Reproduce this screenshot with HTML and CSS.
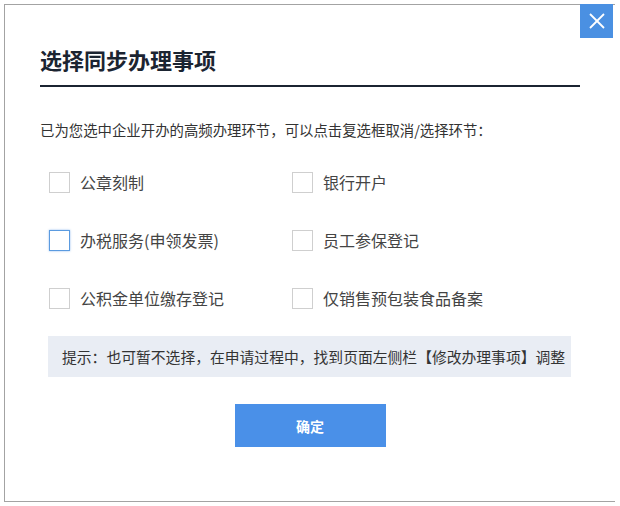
FILE: index.html
```html
<html>
	<head>
		<title>选择同步办理事项</title>
		<meta name="viewport" content="width=device-width, initial-scale=1">
		<link rel="stylesheet" href="styles.css">
	</head>
	<body>
		<div class="dialog">
			<button class="close-btn" aria-label="关闭">
				<svg width="16" height="16" viewBox="0 0 16 16">
					<line x1="1" y1="1" x2="15" y2="15" stroke="#fff" stroke-width="1.8"/>
					<line x1="15" y1="1" x2="1" y2="15" stroke="#fff" stroke-width="1.8"/>
				</svg>
			</button>
			<div class="content">
				<h2 class="title">选择同步办理事项</h2>
				<p class="intro">已为您选中企业开办的高频办理环节，可以点击复选框取消/选择环节：</p>
				<div class="options">
					<label class="option"><span class="box"></span>公章刻制</label>
					<label class="option"><span class="box"></span>银行开户</label>
					<label class="option"><span class="box focus"></span>办税服务(申领发票)</label>
					<label class="option"><span class="box"></span>员工参保登记</label>
					<label class="option"><span class="box"></span>公积金单位缴存登记</label>
					<label class="option"><span class="box"></span>仅销售预包装食品备案</label>
				</div>
				<div class="tip">提示：也可暂不选择，在申请过程中，找到页面左侧栏【修改办理事项】调整</div>
				<div class="actions">
					<button class="btn-ok">确定</button>
				</div>
			</div>
		</div>
	</body>
</html>
```

FILE: styles.css
```css
*{
	box-sizing: border-box;
}
body{
	margin: 0;
	padding: 4px 0 0 4px;
	background-color: #fff;
	font-family: "Microsoft YaHei", "Noto Sans CJK SC", sans-serif;
	color: #333;
}
.dialog{
	position: relative;
	width: 611px;
	height: 498px;
	border: 1px solid #a3a3a3;
	border-right: 0;
	background-color: #fff;
}
.close-btn{
	position: absolute;
	top: -1px;
	right: 2px;
	width: 33px;
	height: 34px;
	padding: 0;
	border: 0;
	background-color: #4a90e2;
	display: flex;
	align-items: center;
	justify-content: center;
	cursor: pointer;
}
.content{
	width: 575px;
	padding: 39px 0 0 35px;
}
.title{
	margin: 0;
	padding-bottom: 11px;
	font-size: 22px;
	line-height: 30px;
	font-weight: bold;
	color: #1b2431;
	border-bottom: 2px solid #1b2431;
}
.intro{
	margin: 33px 0 0 0;
	font-size: 14.4px;
	line-height: 20px;
	color: #333;
}
.options{
	display: grid;
	grid-template-columns: 243px 243px;
	row-gap: 36px;
	margin-top: 31px;
	padding-left: 9px;
}
.option{
	display: flex;
	align-items: center;
	gap: 10px;
	height: 22px;
	font-size: 16px;
	color: #444;
	cursor: pointer;
}
.box{
	width: 21px;
	height: 21px;
	border: 1px solid #cfcfcf;
	background-color: #fff;
}
.box.focus{
	border-color: #5b9be0;
	box-shadow: 0 0 2px rgba(74, 144, 226, .6);
}
.tip{
	margin: 27px 0 0 8px;
	width: 523px;
	height: 41px;
	padding-left: 14px;
	background-color: #e9edf4;
	font-size: 14.8px;
	line-height: 41px;
	color: #333;
	white-space: nowrap;
}
.actions{
	display: flex;
	justify-content: center;
	margin-top: 27px;
}
.btn-ok{
	width: 151px;
	height: 43px;
	border: 0;
	background-color: #4a90e8;
	color: #fff;
	font-family: "Microsoft YaHei", "Noto Sans CJK SC", sans-serif;
	font-size: 14px;
	font-weight: bold;
	cursor: pointer;
}
```
